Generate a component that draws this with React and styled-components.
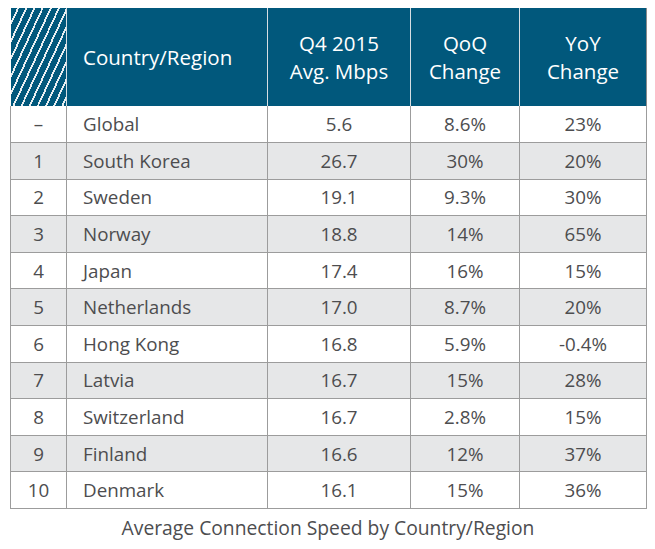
import React from 'react';
import styled, { createGlobalStyle } from 'styled-components';

const GlobalStyle = createGlobalStyle`
  html, body {
    margin: 0;
    padding: 0;
    background: #ffffff;
  }
  body {
    font-family: "Open Sans", "Noto Sans", "Liberation Sans", sans-serif;
  }
`;

const Page = styled.div`
  width: 655px;
  height: 549px;
  padding: 8px 0 0 10px;
  box-sizing: border-box;
`;

const Table = styled.table`
  width: 636px;
  border-collapse: collapse;
  table-layout: fixed;
  border-bottom: 1px solid #9c9c9c;
`;

const HeadCell = styled.th`
  background: #01587c;
  color: #ffffff;
  height: 98px;
  padding: 0;
  font-size: 20.5px;
  font-weight: 500;
  line-height: 28px;
  text-align: ${props => (props.left ? 'left' : 'center')};
  padding-left: ${props => (props.left ? '16px' : '0')};
  border-left: 1.5px solid #d6dee3;
  &:first-child {
    border-left: none;
  }
  &:last-child {
    border-right: 1px solid #8a8a8a;
  }
`;

const HatchCell = styled.th`
  padding: 0;
  height: 98px;
  background-color: #01587c;
  background-image: repeating-linear-gradient(
    115deg,
    #01587c 0px,
    #01587c 5.6px,
    #e8eef1 5.6px,
    #e8eef1 7.4px
  );
`;

const Row = styled.tr`
  background: ${props => (props.shaded ? '#e6e7e8' : '#ffffff')};
`;

const Cell = styled.td`
  height: 36.6px;
  padding: 0;
  box-sizing: border-box;
  border: 1px solid #9c9c9c;
  border-top: ${props => (props.first ? 'none' : '1px solid #9c9c9c')};
  color: #4d4d4f;
  font-size: 18.8px;
  font-weight: 400;
  text-align: ${props => (props.left ? 'left' : 'center')};
  padding-left: ${props => (props.left ? '16px' : '0')};
`;

const Caption = styled.div`
  width: 636px;
  margin-top: 5px;
  text-align: center;
  color: #4d4d4f;
  font-size: 19.3px;
  font-weight: 400;
`;

const rows = [
  ['–', 'Global', '5.6', '8.6%', '23%'],
  ['1', 'South Korea', '26.7', '30%', '20%'],
  ['2', 'Sweden', '19.1', '9.3%', '30%'],
  ['3', 'Norway', '18.8', '14%', '65%'],
  ['4', 'Japan', '17.4', '16%', '15%'],
  ['5', 'Netherlands', '17.0', '8.7%', '20%'],
  ['6', 'Hong Kong', '16.8', '5.9%', '-0.4%'],
  ['7', 'Latvia', '16.7', '15%', '28%'],
  ['8', 'Switzerland', '16.7', '2.8%', '15%'],
  ['9', 'Finland', '16.6', '12%', '37%'],
  ['10', 'Denmark', '16.1', '15%', '36%'],
];

export default function App() {
  return (
    <Page>
      <GlobalStyle />
      <Table>
        <colgroup>
          <col style={{ width: 56 }} />
          <col style={{ width: 201 }} />
          <col style={{ width: 143 }} />
          <col style={{ width: 109 }} />
          <col style={{ width: 127 }} />
        </colgroup>
        <thead>
          <tr>
            <HatchCell />
            <HeadCell left>Country/Region</HeadCell>
            <HeadCell>Q4 2015<br />Avg. Mbps</HeadCell>
            <HeadCell>QoQ<br />Change</HeadCell>
            <HeadCell>YoY<br />Change</HeadCell>
          </tr>
        </thead>
        <tbody>
          {rows.map((r, i) => (
            <Row key={r[1]} shaded={i % 2 === 1}>
              <Cell first={i === 0}>{r[0]}</Cell>
              <Cell first={i === 0} left>{r[1]}</Cell>
              <Cell first={i === 0}>{r[2]}</Cell>
              <Cell first={i === 0}>{r[3]}</Cell>
              <Cell first={i === 0}>{r[4]}</Cell>
            </Row>
          ))}
        </tbody>
      </Table>
      <Caption>Average Connection Speed by Country/Region</Caption>
    </Page>
  );
}
